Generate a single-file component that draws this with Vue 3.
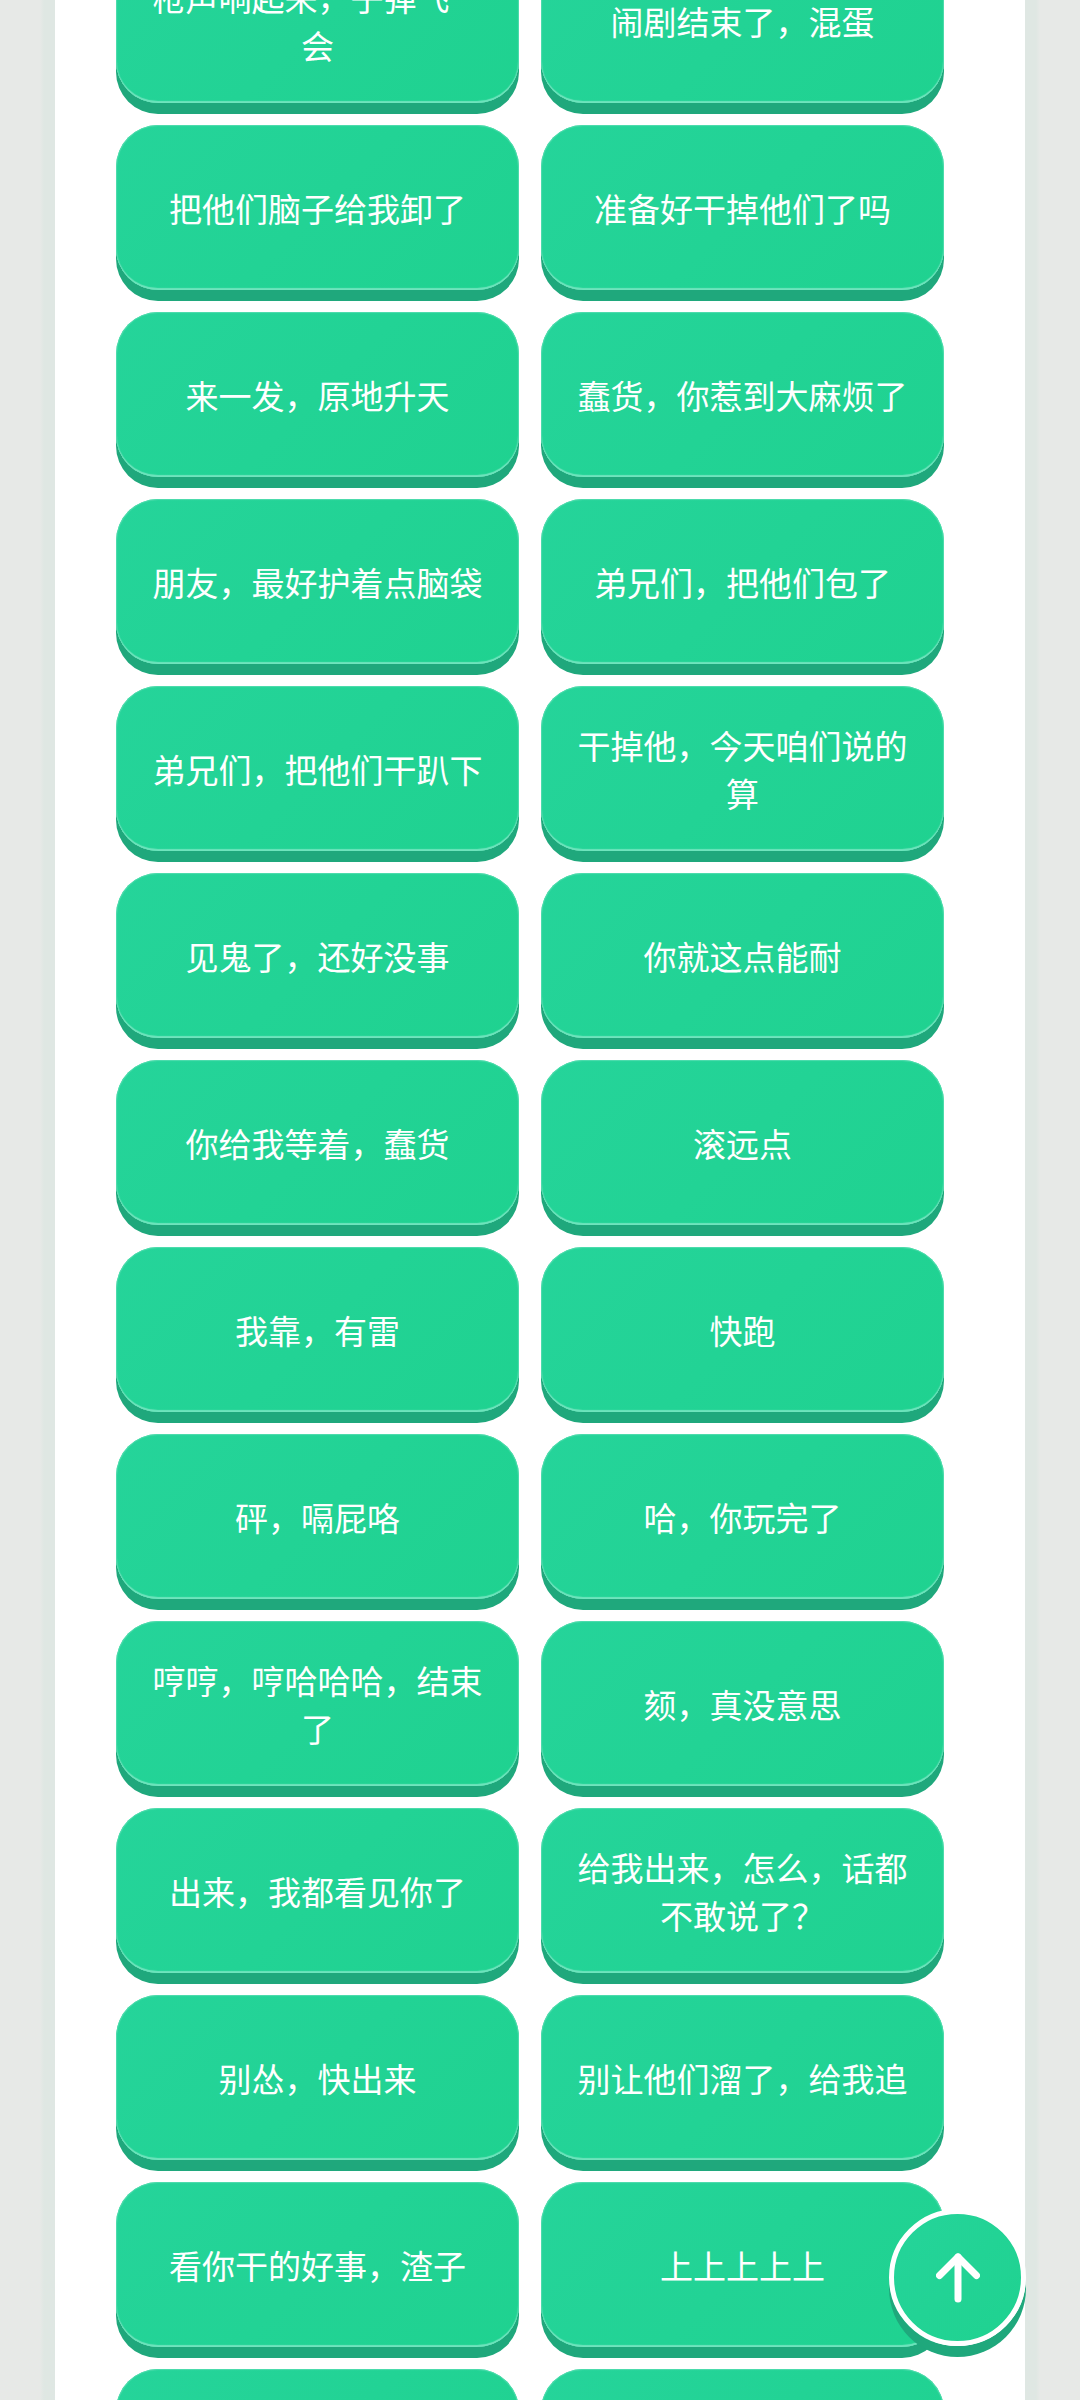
<template>
  <div class="page">
    <div class="panel">
      <div class="grid">
        <button v-for="(item, i) in lines" :key="i" class="voice-btn">{{ item }}</button>
      </div>
    </div>
    <button class="top-btn" aria-label="back to top">
      <svg width="44" height="50" viewBox="0 0 44 50" fill="none" stroke="#fff" stroke-width="7" stroke-linecap="round" stroke-linejoin="round">
        <path d="M22 4V46" />
        <path d="M3.500 22.500L22 4L40.500 22.500" />
      </svg>
    </button>
  </div>
</template>

<script setup>
const lines = [
  "枪声响起来，子弹飞一会",
  "闹剧结束了，混蛋",
  "把他们脑子给我卸了",
  "准备好干掉他们了吗",
  "来一发，原地升天",
  "蠢货，你惹到大麻烦了",
  "朋友，最好护着点脑袋",
  "弟兄们，把他们包了",
  "弟兄们，把他们干趴下",
  "干掉他，今天咱们说的算",
  "见鬼了，还好没事",
  "你就这点能耐",
  "你给我等着，蠢货",
  "滚远点",
  "我靠，有雷",
  "快跑",
  "砰，嗝屁咯",
  "哈，你玩完了",
  "哼哼，哼哈哈哈，结束了",
  "颏，真没意思",
  "出来，我都看见你了",
  "给我出来，怎么，话都不敢说了？",
  "别怂，快出来",
  "别让他们溜了，给我追",
  "看你干的好事，渣子",
  "上上上上上",
  "",
  "",
];
</script>

<style>
html,
body {
  margin: 0;
  overflow: hidden;
}
</style>

<style scoped>
.page {
  height: 2400px;
  overflow: hidden;
  background: linear-gradient(90deg, #e7e9e7 0, #e7e9e7 40px, #dfe7e3 44px, #dfe7e3 1036px, #e7e9e7 1040px, #e7e9e7 1080px);
  font-family: "Noto Sans CJK SC", sans-serif;
}

.panel {
  display: flow-root;
  width: 970px;
  height: 2400px;
  margin-left: 55px;
  background: #fff;
  padding-left: 61px;
  box-sizing: border-box;
}

.grid {
  display: grid;
  grid-template-columns: 403px 403px;
  grid-auto-rows: 165px;
  gap: 22px;
  margin-top: -62px;
}

.voice-btn {
  border: none;
  border-radius: 42px;
  padding: 0 34px;
  background: linear-gradient(135deg, #25d49a, #1fd290);
  box-shadow: 0 11px 0 #1fa87c, inset 0 -3px 1px -1px #6fe4bd, inset 0 0 1px 1px #52dcae;
  color: #fff;
  font-family: inherit;
  font-size: 33px;
  font-weight: 400;
  line-height: 48px;
  text-align: center;
}

.top-btn {
  position: fixed;
  left: 889px;
  top: 2209px;
  width: 137px;
  height: 137px;
  padding: 0;
  display: flex;
  align-items: center;
  justify-content: center;
  border: 5px solid #fff;
  border-radius: 50%;
  box-sizing: border-box;
  background: linear-gradient(135deg, #25d49a, #1fd290);
  box-shadow: 0 11px 0 #1fa87c;
}
</style>
